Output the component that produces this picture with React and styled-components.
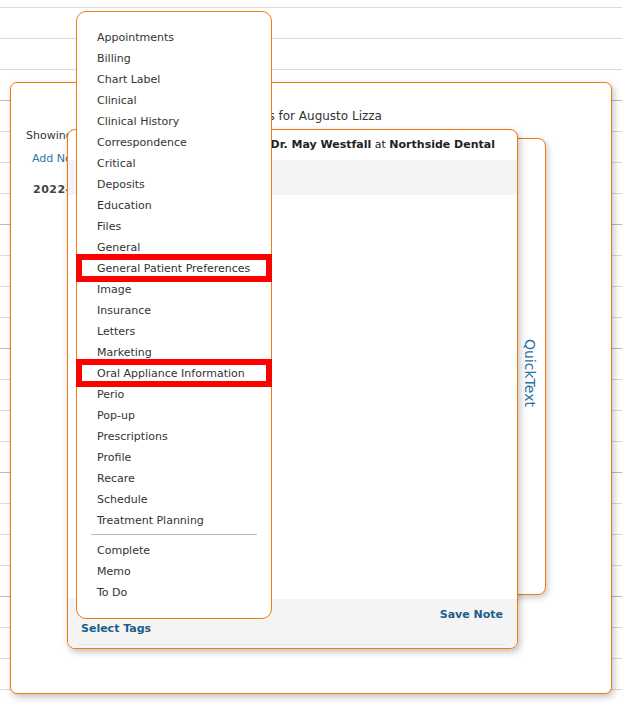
import React from "react";
import styled, { createGlobalStyle } from "styled-components";

const ORANGE = "#f07a0a";
const LINK = "#1c5d8a";

const GlobalStyle = createGlobalStyle`
  html, body { margin: 0; padding: 0; background: #fff; }
  body { font-family: "DejaVu Sans", Verdana, sans-serif; color: #333; }
`;

const Page = styled.div`
  position: relative;
  width: 622px;
  height: 705px;
  overflow: hidden;
`;

// background table the modal sits on
const Grid = styled.div`
  padding-top: 7px;
`;

const GridRow = styled.div`
  height: 31px;
  box-sizing: border-box;
  border-top: 1px solid ${(p) => (p.$dark ? "#bcbcbc" : "#dadada")};
`;

const Overlay = styled.div`
  position: absolute;
  inset: 0;
  padding: 82px 10px 11px 10px;
  box-sizing: border-box;
`;

const Modal = styled.div`
  position: relative;
  height: 100%;
  box-sizing: border-box;
  background: #fff;
  border: 1px solid ${ORANGE};
  border-radius: 7px;
  box-shadow: 2px 3px 7px rgba(0, 0, 0, 0.24);
`;

const ModalTitle = styled.div`
  padding-top: 26px;
  font-size: 12px;
  line-height: 14px;
  text-align: center;
  color: #333;
`;

// the list sits under the editor, only its start peeks out
const NotesList = styled.div`
  padding: 6px 0 0 15px;
  white-space: nowrap;
  font-size: 11px;
  line-height: 14px;
`;

const Showing = styled.div`
  color: #333;
`;

const AddLink = styled.div`
  margin: 9px 0 0 6px;
  color: #2a78ad;
`;

const DateHead = styled.div`
  margin: 17px 0 0 7px;
  font-weight: bold;
  color: #444;
  letter-spacing: 0.5px;
`;

const QuickPanel = styled.div`
  position: absolute;
  left: 120px;
  top: 55px;
  width: 415px;
  height: 457px;
  box-sizing: border-box;
  border: 1px solid ${ORANGE};
  border-radius: 8px;
  background: #fff;
  box-shadow: 2px 3px 6px rgba(0, 0, 0, 0.2);
  display: flex;
  justify-content: flex-end;
  align-items: center;
  padding: 12px 7px 0 0;
  z-index: 1;
`;

const QuickLabel = styled.span`
  writing-mode: vertical-rl;
  font-size: 14px;
  line-height: 16px;
  color: #2b6f9e;
`;

const Editor = styled.div`
  position: absolute;
  left: 56px;
  top: 46px;
  width: 451px;
  height: 520px;
  box-sizing: border-box;
  border: 1px solid ${ORANGE};
  border-radius: 8px;
  background: #fff;
  box-shadow: 2px 3px 7px rgba(0, 0, 0, 0.25);
  display: flex;
  flex-direction: column;
  z-index: 2;
`;

const EditorHead = styled.div`
  height: 30px;
  line-height: 30px;
  padding-right: 22px;
  text-align: right;
  font-size: 11px;
  color: #222;
  white-space: nowrap;
`;

const Toolbar = styled.div`
  height: 35px;
  background: #f4f4f4;
`;

const Body = styled.div`
  flex: 1;
`;

const Footer = styled.div`
  height: 49px;
  background: #f4f4f4;
  border-radius: 0 0 7px 7px;
  padding: 0 11px;
`;

const FooterInner = styled.div`
  height: 46px;
  box-sizing: border-box;
  padding-top: 9px;
  border-bottom: 1px solid #e4e4e4;
`;

const FooterLink = styled.div`
  font-size: 11px;
  line-height: 14px;
  font-weight: bold;
  color: ${LINK};
  text-align: ${(p) => (p.$right ? "right" : "left")};
  padding: ${(p) => (p.$right ? "0 3px 0 0" : "0 0 0 2px")};
`;

const TagMenu = styled.div`
  position: absolute;
  left: 8px;
  top: -119px;
  width: 196px;
  box-sizing: border-box;
  background: #fff;
  border: 1px solid ${ORANGE};
  border-radius: 10px;
  padding: 15px 0;
  z-index: 3;
`;

const TagItem = styled.div`
  position: relative;
  height: 21px;
  line-height: 21px;
  padding-left: 20px;
  font-size: 11px;
  color: #333;
  white-space: nowrap;

  ${(p) =>
    p.$marked &&
    `
    &::after {
      content: "";
      position: absolute;
      left: -1px;
      right: -1px;
      top: -4px;
      bottom: -3px;
      border: 6px solid #ff0000;
    }
  `}
`;

const TagDivider = styled.div`
  height: 1px;
  background: #bbb;
  margin: 3px 14px 5px;
`;

const tags = [
  "Appointments",
  "Billing",
  "Chart Label",
  "Clinical",
  "Clinical History",
  "Correspondence",
  "Critical",
  "Deposits",
  "Education",
  "Files",
  "General",
  "General Patient Preferences",
  "Image",
  "Insurance",
  "Letters",
  "Marketing",
  "Oral Appliance Information",
  "Perio",
  "Pop-up",
  "Prescriptions",
  "Profile",
  "Recare",
  "Schedule",
  "Treatment Planning",
];

const marked = ["General Patient Preferences", "Oral Appliance Information"];

const statuses = ["Complete", "Memo", "To Do"];

export default function App() {
  return (
    <Page>
      <GlobalStyle />
      <Grid>
        {Array.from({ length: 23 }).map((_, i) => (
          <GridRow key={i} $dark={i % 4 === 3} />
        ))}
      </Grid>

      <Overlay>
        <Modal>
          <ModalTitle>Notes for Augusto Lizza</ModalTitle>
          <NotesList>
            <Showing>Showing 1 of 1 notes</Showing>
            <AddLink>Add Note</AddLink>
            <DateHead>2022-05-10</DateHead>
          </NotesList>

          <QuickPanel>
            <QuickLabel>QuickText</QuickLabel>
          </QuickPanel>

          <Editor>
            <EditorHead>
              Note by <b>Dr. May Westfall</b> at <b>Northside Dental</b>
            </EditorHead>
            <Toolbar />
            <Body />
            <Footer>
              <FooterInner>
                <FooterLink $right>Save Note</FooterLink>
                <FooterLink>Select Tags</FooterLink>
              </FooterInner>
            </Footer>

            <TagMenu>
              {tags.map((t) => (
                <TagItem key={t} $marked={marked.includes(t)}>
                  {t}
                </TagItem>
              ))}
              <TagDivider />
              {statuses.map((t) => (
                <TagItem key={t}>{t}</TagItem>
              ))}
            </TagMenu>
          </Editor>
        </Modal>
      </Overlay>
    </Page>
  );
}
